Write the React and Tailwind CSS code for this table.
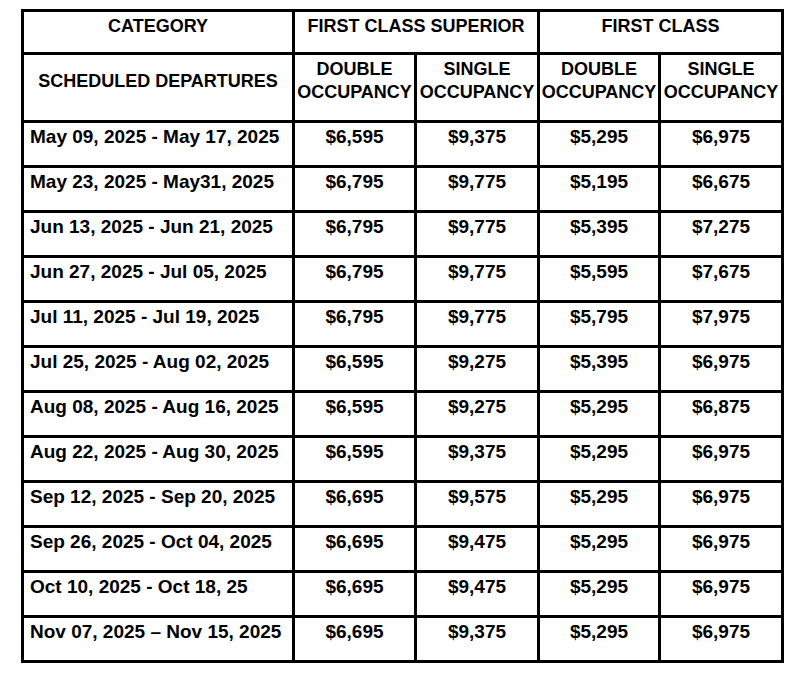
import React from 'react';

const rows = [
  ['May 09, 2025 - May 17, 2025', '$6,595', '$9,375', '$5,295', '$6,975'],
  ['May 23, 2025 - May31, 2025', '$6,795', '$9,775', '$5,195', '$6,675'],
  ['Jun 13, 2025 - Jun 21, 2025', '$6,795', '$9,775', '$5,395', '$7,275'],
  ['Jun 27, 2025 - Jul 05, 2025', '$6,795', '$9,775', '$5,595', '$7,675'],
  ['Jul 11, 2025 - Jul 19, 2025', '$6,795', '$9,775', '$5,795', '$7,975'],
  ['Jul 25, 2025 - Aug 02, 2025', '$6,595', '$9,275', '$5,395', '$6,975'],
  ['Aug 08, 2025 - Aug 16, 2025', '$6,595', '$9,275', '$5,295', '$6,875'],
  ['Aug 22, 2025 - Aug 30, 2025', '$6,595', '$9,375', '$5,295', '$6,975'],
  ['Sep 12, 2025 - Sep 20, 2025', '$6,695', '$9,575', '$5,295', '$6,975'],
  ['Sep 26, 2025 - Oct 04, 2025', '$6,695', '$9,475', '$5,295', '$6,975'],
  ['Oct 10, 2025 - Oct 18, 25', '$6,695', '$9,475', '$5,295', '$6,975'],
  ['Nov 07, 2025 \u2013 Nov 15, 2025', '$6,695', '$9,375', '$5,295', '$6,975'],
];

const App = () => {
  return (
    <div className="min-h-screen bg-white pt-[9px] pl-[21px] font-['Liberation_Sans',Arial,sans-serif] font-bold text-black">
      <div className="inline-grid grid-cols-[268px_119px_120px_118px_120px] gap-[3px] bg-black p-[3px]">
        {/* header row 1 */}
        <div className="bg-white h-[40px] pt-[3px] text-center text-[18px] leading-[22px]">CATEGORY</div>
        <div className="col-span-2 bg-white pt-[3px] text-center text-[18px] leading-[22px]">FIRST CLASS SUPERIOR</div>
        <div className="col-span-2 bg-white pt-[3px] text-center text-[18px] leading-[22px]">FIRST CLASS</div>

        {/* header row 2 */}
        <div className="bg-white h-[65px] pt-[15px] text-center text-[18px] leading-[22px]">SCHEDULED DEPARTURES</div>
        {['DOUBLE', 'SINGLE', 'DOUBLE', 'SINGLE'].map((label, i) => (
          <div key={i} className="bg-white pt-[3px] text-center text-[18px] leading-[22.5px] whitespace-nowrap">
            {label}
            <br />
            OCCUPANCY
          </div>
        ))}

        {/* data rows */}
        {rows.map((row) => (
          <React.Fragment key={row[0]}>
            <div className="bg-white h-[42px] pt-[3px] pl-[6px] text-[19px] leading-[22px] whitespace-nowrap">{row[0]}</div>
            {row.slice(1).map((price, j) => (
              <div key={j} className="bg-white pt-[3px] text-center text-[19px] leading-[22px]">{price}</div>
            ))}
          </React.Fragment>
        ))}
      </div>
    </div>
  );
};

export default App;
